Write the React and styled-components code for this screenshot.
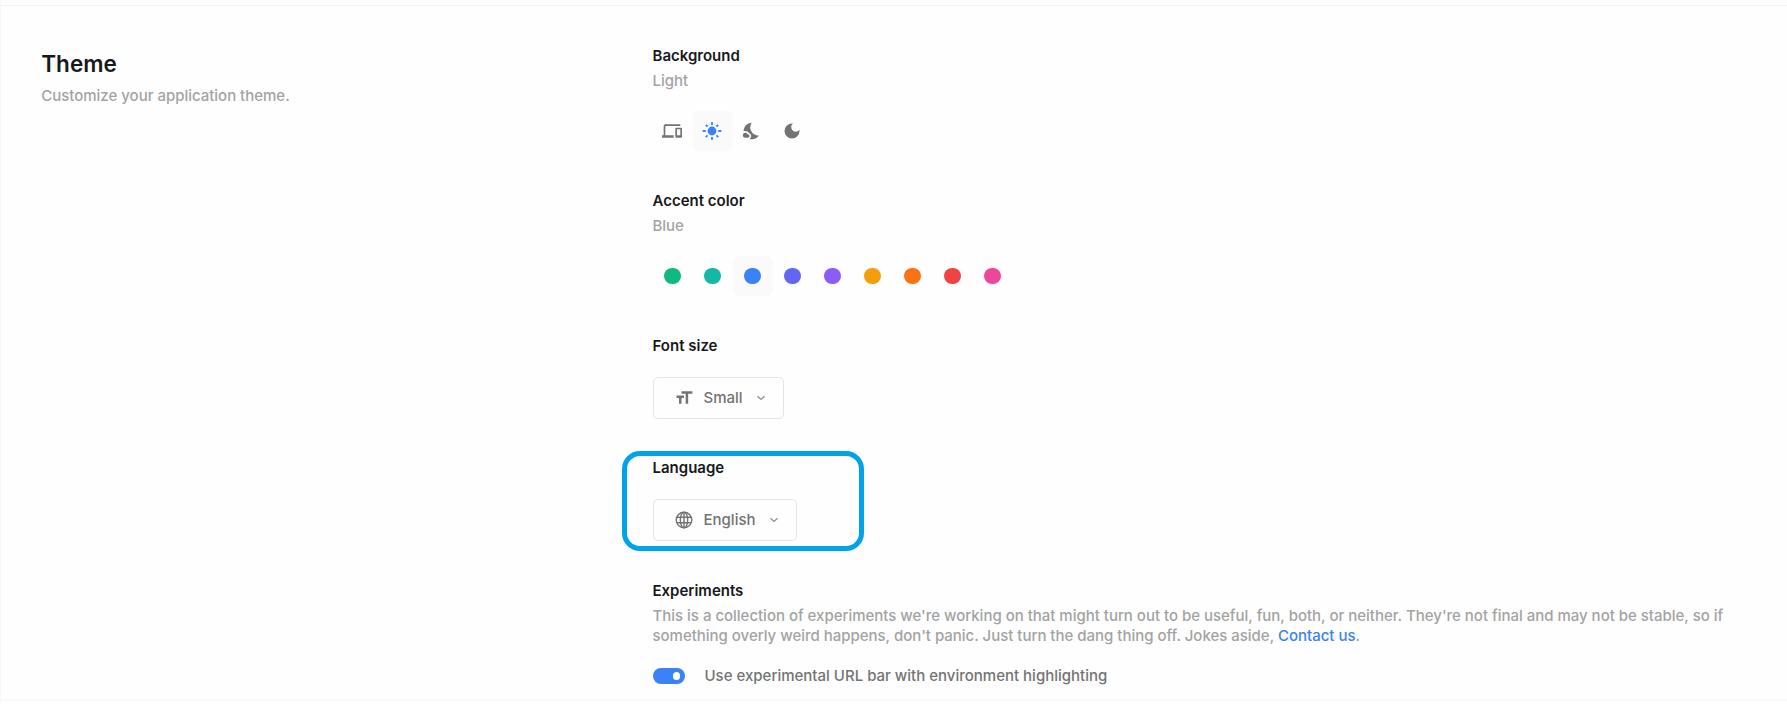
import React from 'react';
import styled, { createGlobalStyle } from 'styled-components';
import { MdDevices, MdNightsStay, MdDarkMode, MdFormatSize } from 'react-icons/md';

const GlobalStyle = createGlobalStyle`
  *, *::before, *::after { box-sizing: border-box; }
  body {
    margin: 0;
    background: #fefefe;
    color: #737373;
    font: 500 15px/20px Inter, sans-serif;
  }
  h2, h3, p { margin: 0; }
  button { font: inherit; }
`;

const Page = styled.main`
  display: flex;
  flex-direction: column;
  height: 704px;
  padding-top: 5px;
  overflow: hidden;
  border-left: 1px solid #f8f8f8;
`;

const Section = styled.section`
  display: grid;
  grid-template-columns: 611.25px 1fr;
  height: 696px;
  padding: 40px 40px 0 40.25px;
  border-top: 1px solid #f3f3f3;
  border-bottom: 2px solid #f9f9f9;
`;

const Title = styled.h2`
  margin-top: 3px;
  font-size: 22.5px;
  line-height: 30px;
  font-weight: 600;
  color: #18181b;
`;

const Hint = styled.p`
  margin-top: ${({ $gap = 5 }) => $gap}px;
  letter-spacing: -0.016px;
  color: #a3a3a3;
`;

const Options = styled.div`
  display: flex;
  flex-direction: column;
`;

const Group = styled.div`
  height: ${({ $height }) => $height}px;
`;

const Heading = styled.h3`
  font-size: 15px;
  line-height: 20px;
  font-weight: 600;
  color: #18181b;
`;

const Choices = styled.div`
  display: flex;
  margin-top: 20px;
`;

const Choice = styled.button`
  display: flex;
  align-items: center;
  justify-content: center;
  width: 40px;
  height: 40px;
  padding: 0;
  border: 0;
  border-radius: 5px;
  background: ${({ $active }) => ($active ? '#fafafa' : 'transparent')};
  color: ${({ $active }) => ($active ? '#3b82f6' : '#737373')};
  svg { width: 20px; height: 20px; margin-right: 1px; }
`;

const Swatch = styled.span`
  width: 17px;
  height: 16px;
  border-radius: 8px;
  background: ${({ $color }) => $color};
`;

const Select = styled.button`
  display: flex;
  align-items: center;
  width: ${({ $width }) => $width}px;
  height: 42px;
  margin-top: 21px;
  padding: 0 16px 0 20px;
  border: 1px solid #e5e5e5;
  border-radius: 5px;
  background: transparent;
  color: #737373;
`;

const SelectLabel = styled.span`
  margin: 0 auto 0 10px;
`;

const Link = styled.a`
  color: #3b82f6;
`;

const ToggleRow = styled.div`
  display: flex;
  align-items: center;
  gap: 20px;
  margin-top: 20px;
`;

const Switch = styled.span`
  display: flex;
  align-items: center;
  justify-content: flex-end;
  width: 32px;
  height: 16px;
  padding-right: 5px;
  border-radius: 8px;
  background: #3b82f6;
`;

const Knob = styled.span`
  width: 7px;
  height: 8px;
  border-radius: 4px;
  background: #fff;
`;

const Callout = styled.div`
  position: absolute;
  left: 622px;
  top: 451px;
  width: 242px;
  height: 100px;
  border: 5px solid #00a2e8;
  border-radius: 18px;
  pointer-events: none;
`;

const Sun = () => (
  <svg viewBox="0 0 20 20" fill="none" stroke="currentColor" strokeWidth="1.8">
    <circle cx="10" cy="10" r="4.4" fill="currentColor" stroke="none" />
    <path d="M10 1v3M10 16v3M.7 10h3M16.3 10h3M3.8 3.8l1.8 1.8M14.4 14.4l1.8 1.8M3.8 16.2l1.8-1.8M14.4 5.6l1.8-1.8" />
  </svg>
);

const Globe = () => (
  <svg width="20" height="20" viewBox="0 0 20 20" fill="none" stroke="currentColor" strokeWidth="1.4">
    <circle cx="10" cy="10" r="7.8" />
    <ellipse cx="10" cy="10" rx="3.7" ry="7.8" />
    <path d="M10 2.2v15.6M2.8 7.2h14.4M2.8 12.8h14.4" />
  </svg>
);

const Chevron = () => (
  <svg width="12" height="12" viewBox="0 0 12 12" fill="none" stroke="#929292" strokeWidth="1.4">
    <path d="M2.5 4.2l3.5 3.2L9.5 4.2" />
  </svg>
);

const themes = [MdDevices, Sun, MdNightsStay, MdDarkMode];
const colors = ['#10b981', '#14b8a6', '#3b82f6', '#6366f1', '#8b5cf6', '#f59e0b', '#f97316', '#ef4444', '#ec4899'];

export default function App() {
  return (
    <>
      <GlobalStyle />
      <Page>
        <Section>
          <div>
            <Title>Theme</Title>
            <Hint $gap={7}>Customize your application theme.</Hint>
          </div>
          <Options>
            <Group $height={145}>
              <Heading>Background</Heading>
              <Hint>Light</Hint>
              <Choices>
                {themes.map((Icon, i) => (
                  <Choice key={i} $active={i === 1}><Icon /></Choice>
                ))}
              </Choices>
            </Group>
            <Group $height={145}>
              <Heading>Accent color</Heading>
              <Hint>Blue</Hint>
              <Choices>
                {colors.map((color, i) => (
                  <Choice key={color} $active={i === 2}><Swatch $color={color} /></Choice>
                ))}
              </Choices>
            </Group>
            <Group $height={122}>
              <Heading>Font size</Heading>
              <Select $width={131}>
                <MdFormatSize size={20} />
                <SelectLabel>Small</SelectLabel>
                <Chevron />
              </Select>
            </Group>
            <Group $height={123}>
              <Heading>Language</Heading>
              <Select $width={144}>
                <Globe />
                <SelectLabel>English</SelectLabel>
                <Chevron />
              </Select>
            </Group>
            <div>
              <Heading>Experiments</Heading>
              <Hint>
                This is a collection of experiments we're working on that might turn out to be useful, fun, both, or
                neither. They're not final and may not be stable, so if something overly weird happens, don't panic.
                Just turn the dang thing off. Jokes aside, <Link>Contact us</Link>.
              </Hint>
              <ToggleRow>
                <Switch><Knob /></Switch>
                <span>Use experimental URL bar with environment highlighting</span>
              </ToggleRow>
            </div>
          </Options>
        </Section>
      </Page>
      <Callout />
    </>
  );
}
